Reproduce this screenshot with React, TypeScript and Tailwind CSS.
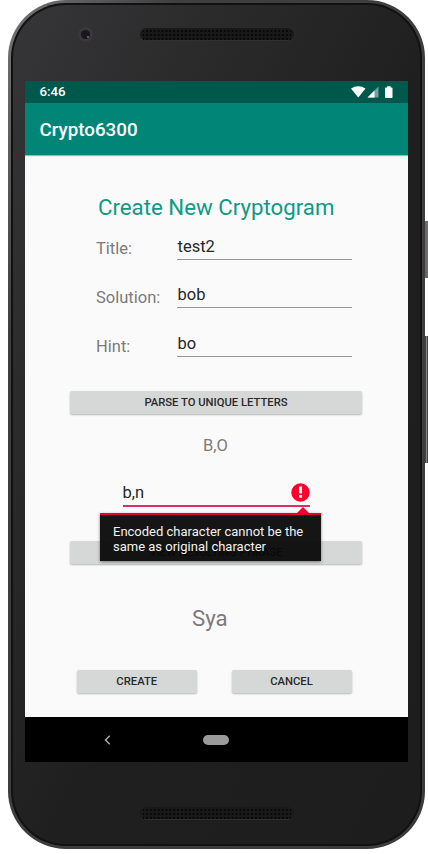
import React from "react";

const speakerDots =
  "bg-[radial-gradient(circle,#080808_0.8px,transparent_1.3px)] bg-[size:3.9px_4px] bg-[position:2px_1px]";

function Speaker() {
  return (
    <div className="h-[13px] w-[154px] rounded-full border-b border-[#303030] bg-[#191919] px-[3px]">
      <div className={`h-3 w-full ${speakerDots}`} />
    </div>
  );
}

function GreyButton({ label, className }: { label: string; className: string }) {
  return (
    <button
      className={`block h-[23px] rounded-[2px] bg-[#d6d8d7] text-center text-[11.25px] leading-[24px] font-medium whitespace-nowrap text-[#2a2a2a] shadow-[0_1px_2px_rgba(0,0,0,0.28)] ${className}`}
    >
      {label}
    </button>
  );
}

function Field({
  label,
  value,
  className,
  labelClass = "pt-[3px]",
}: {
  label: string;
  value: string;
  className: string;
  labelClass?: string;
}) {
  return (
    <div className={`flex pl-[71px] ${className}`}>
      <div className={`w-[81px] text-[16.5px] leading-6 text-[#7b7b7b] ${labelClass}`}>{label}</div>
      <div className="h-[25px] w-[175px] border-b border-[#989898] pl-[0.5px] text-[16.5px] leading-[23px] text-[#272727]">
        {value}
      </div>
    </div>
  );
}

function StatusBar() {
  return (
    <div className="flex h-[22px] items-center justify-between bg-[#00574b] pr-[14px] pl-[14.5px] text-white">
      <span className="text-[13.3px] leading-[22px] font-medium">6:46</span>
      <svg width="44" height="14" viewBox="0 0 44 14" fill="white">
        <path d="M1 3.6C5 .3 11.5 .3 15.5 3.6L8.3 12.6Z" />
        <path d="M28.5 1.5V12.5H17.5Z" fillOpacity=".45" />
        <path d="M24.5 5.5V12.5H17.5Z" />
        <path d="M37 1.2h3.6v1.3h1.1q.8 0 .8.8v8.9q0 .8-.8.8h-5.9q-.8 0-.8-.8V3.3q0-.8.8-.8H37z" />
      </svg>
    </div>
  );
}

function ErrorPopup() {
  return (
    <div className="absolute top-[352px] left-[75px] w-[221px]">
      <svg className="ml-[197px] block" width="12" height="6" viewBox="0 0 12 6">
        <path d="M6 0L12 6H0Z" fill="#f4002f" />
      </svg>
      <div className="h-[48px] border-t-2 border-[#e4002b] bg-[#080808]/95 pt-[9px] pl-[13px] text-[13px] leading-[15px] whitespace-nowrap text-[#f2f2f2] shadow-[0_1px_3px_rgba(0,0,0,0.45)]">
        Encoded character cannot be the
        <br />
        same as original character
      </div>
    </div>
  );
}

function Form() {
  return (
    <div className="relative h-[562px] bg-[#fafafa]">
      <h1 className="pt-[36px] pl-[73px] text-[22.25px] leading-8 whitespace-nowrap text-[#0f9986]">
        Create New Cryptogram
      </h1>
      <Field label="Title:" value="test2" className="mt-[12px] h-[48px]" labelClass="pt-[2px]" />
      <Field label="Solution:" value="bob" className="h-[49px]" />
      <Field label="Hint:" value="bo" className="h-[49px]" />
      <GreyButton label="PARSE TO UNIQUE LETTERS" className="mt-[10px] ml-[45px] w-[292px]" />
      <div className="mt-[20px] pl-[178px] text-[16.5px] leading-6 text-[#7b7b7b]">B,O</div>
      <div className="mt-[21px] ml-[97.5px] flex h-[28px] w-[187.5px] justify-between border-b-2 border-[#dc2d68] text-[16.5px] leading-[28px] text-[#272727]">
        <span>b,n</span>
        <svg className="mt-1" width="19" height="19" viewBox="0 0 19 19">
          <circle cx="9.5" cy="9.5" r="9.2" fill="#ff002e" />
          <path d="M8 3.6h3v7H8zM8 12h3v2.8H8z" fill="white" />
        </svg>
      </div>
      <GreyButton label="VIEW RESULTING PHRASE" className="mt-[34px] ml-[45px] w-[292px]" />
      <div className="mt-[38px] pl-[167px] text-[22.25px] leading-8 text-[#7b7b7b]">Sya</div>
      <div className="mt-[36px] flex gap-[35px] pl-[52px]">
        <GreyButton label="CREATE" className="w-[119.5px]" />
        <GreyButton label="CANCEL" className="w-[120px]" />
      </div>
      <ErrorPopup />
    </div>
  );
}

export default function App() {
  return (
    <div className="relative h-[854px] w-[428px] overflow-hidden bg-white pl-2 font-[Roboto,sans-serif]">
      <div className="absolute top-[221px] left-[425px] h-[57px] w-[3px] bg-[#6b6969]" />
      <div className="absolute top-[336px] left-[425px] h-[127px] w-[3px] border-x border-[#444] bg-[#858383]" />
      <div className="h-[849px] w-[417px] rounded-[58px] bg-linear-to-br from-[#777677] via-[#403f40] via-20% to-[#3c3b3c] p-[3px]">
        <div className="h-[843px] w-[411px] rounded-[55px] bg-[#111111] p-[2px]">
          <div className="h-[839px] w-[407px] rounded-[53px] bg-linear-to-br from-[#363537] via-[#1f1f1f] via-55% to-[#1d1d1e] pl-[12px]">
            <div className="flex h-[76px] pt-[23px]">
              <div className="mt-[-1px] ml-[53px] flex h-[15px] w-[15px] items-center justify-center rounded-full bg-[#39383a]">
                <div className="flex h-[9px] w-[9px] items-center justify-center rounded-full bg-[#18161f]">
                  <div className="mt-1 ml-1 h-[2px] w-[2px] bg-[#69504f]" />
                </div>
              </div>
              <div className="ml-[47px]">
                <Speaker />
              </div>
            </div>
            <div className="h-[681px] w-[383px] overflow-hidden">
              <StatusBar />
              <div className="relative z-10 h-[52px] bg-[#008577] pl-[14.5px] text-[18.75px] leading-[54px] font-medium text-white shadow-[0_1px_1px_rgba(0,0,0,0.3)]">
                Crypto6300
              </div>
              <Form />
              <div className="flex h-[45px] items-center bg-black pl-[79px]">
                <svg width="7" height="10" viewBox="0 0 7 10" fill="none" stroke="#aaa" strokeWidth="1.5">
                  <path d="M5.7 .8L1.5 5L5.7 9.2" />
                </svg>
                <div className="ml-[92px] h-[10px] w-[26px] rounded-full bg-[#9b9b9b]" />
              </div>
            </div>
            <div className="pt-[45px] pl-[115px]">
              <Speaker />
            </div>
          </div>
        </div>
      </div>
    </div>
  );
}
